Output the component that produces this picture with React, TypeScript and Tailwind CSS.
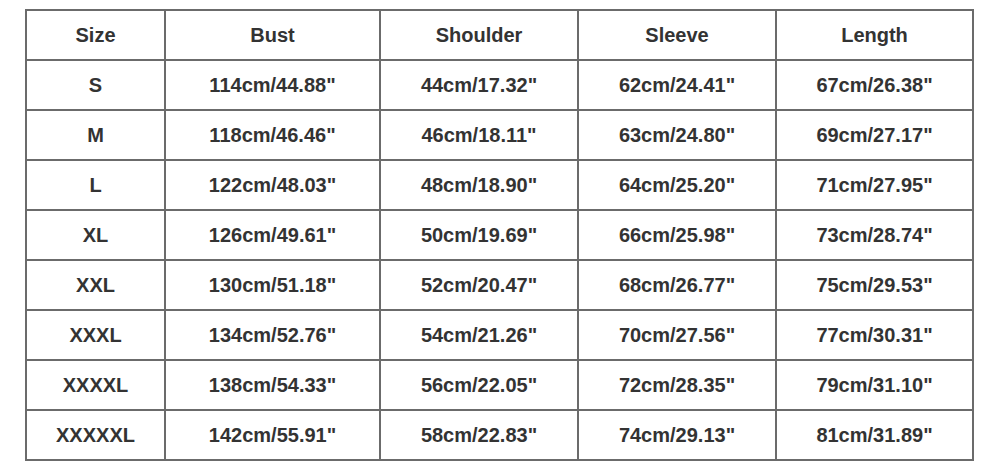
import React from "react";

const headers = ["Size", "Bust", "Shoulder", "Sleeve", "Length"];
const rows = [
  ["S", "114cm/44.88\"", "44cm/17.32\"", "62cm/24.41\"", "67cm/26.38\""],
  ["M", "118cm/46.46\"", "46cm/18.11\"", "63cm/24.80\"", "69cm/27.17\""],
  ["L", "122cm/48.03\"", "48cm/18.90\"", "64cm/25.20\"", "71cm/27.95\""],
  ["XL", "126cm/49.61\"", "50cm/19.69\"", "66cm/25.98\"", "73cm/28.74\""],
  ["XXL", "130cm/51.18\"", "52cm/20.47\"", "68cm/26.77\"", "75cm/29.53\""],
  ["XXXL", "134cm/52.76\"", "54cm/21.26\"", "70cm/27.56\"", "77cm/30.31\""],
  ["XXXXL", "138cm/54.33\"", "56cm/22.05\"", "72cm/28.35\"", "79cm/31.10\""],
  ["XXXXXL", "142cm/55.91\"", "58cm/22.83\"", "74cm/29.13\"", "81cm/31.89\""],
];

export default function App() {
  const all = [headers, ...rows];
  return (
    <div className="w-[1000px] h-[471px] bg-white pt-[9px] pl-[25px]" style={{ fontFamily: '"Liberation Sans", Arial, sans-serif' }}>
      <div className="w-[949px] border-2 border-[#6b6b6b] bg-[#6b6b6b] grid grid-cols-[137px_213px_196px_196px_195px] auto-rows-[48px] gap-[2px]">
        {all.map((r, i) =>
          r.map((c, j) => (
            <div key={`${i}-${j}`} className="bg-white flex items-center justify-center text-[20px] font-bold text-[#333333]">
              {c}
            </div>
          ))
        )}
      </div>
    </div>
  );
}
